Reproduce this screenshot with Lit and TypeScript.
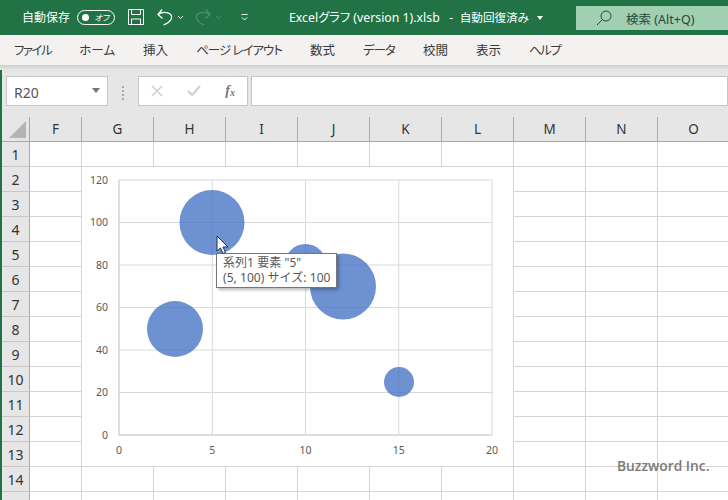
import { LitElement, html, css, svg } from "lit";
import { customElement } from "lit/decorators.js";

const TABS = [
  { t: "ファイル", c: "n2" },
  { t: "ホーム", c: "" },
  { t: "挿入", c: "" },
  { t: "ページ レイアウト", c: "n1" },
  { t: "数式", c: "" },
  { t: "データ", c: "n1" },
  { t: "校閲", c: "" },
  { t: "表示", c: "" },
  { t: "ヘルプ", c: "n2" },
];
const COLS = ["F", "G", "H", "I", "J", "K", "L", "M", "N", "O"];
const ROWS = Array.from({ length: 15 }, (_, i) => i + 1);
const BUBBLES = [
  { cx: 212, cy: 222.5, r: 32.5 },
  { cx: 305.5, cy: 265, r: 21 },
  { cx: 343, cy: 286.5, r: 33 },
  { cx: 175, cy: 329, r: 28 },
  { cx: 399, cy: 382, r: 15 },
];
const PLOT = { l: 119, r: 492, t: 180, b: 435 };
const xAt = (v: number) => PLOT.l + ((PLOT.r - PLOT.l) * v) / 20;
const yAt = (v: number) => PLOT.b - ((PLOT.b - PLOT.t) * v) / 120;

@customElement("app-root")
export class AppRoot extends LitElement {
  static styles = css`
    :host {
      display: block;
      position: relative;
      width: 728px;
      height: 500px;
      overflow: hidden;
      background: #fff;
      font-family: "Noto Sans", "Noto Sans CJK JP", sans-serif;
      font-feature-settings: "palt";
    }
    .title {
      height: 35px;
      background: #217346;
      color: #fff;
      display: flex;
      align-items: center;
      font-size: 12px;
      padding: 0 0 1px 22px;
      box-sizing: border-box;
    }
    .title svg { display: block; flex: none; }
    .autosave { width: 55px; flex: none; }
    .toggle {
      height: 13px;
      border: 1px solid #fff;
      border-radius: 8px;
      display: flex;
      align-items: center;
      justify-content: space-between;
      padding: 0 5px 0 4px;
      box-sizing: content-box;
      margin-right: 13px;
      flex: none;
      width: 27px;
      font-size: 8.5px;
      font-style: italic;
    }
    .knob { width: 7px; height: 7px; border-radius: 50%; background: #fff; }
    .qat { display: flex; align-items: center; width: 161px; flex: none; }
    .undo { margin-left: 13px; }
    .chev { margin-left: 4px; }
    .redo { margin-left: 11px; }
    .custom { margin-left: 19px; }
    .doc { flex: 1; white-space: pre; font-size: 12.3px; display: flex; align-items: center; gap: 8px; }
    .doc svg { margin-top: 2px; }
    .rec { font-size: 11.6px; }
    .search {
      width: 152px;
      height: 24px;
      align-self: flex-end;
      background: #a0cfb2;
      color: #274a38;
      display: flex;
      align-items: center;
      gap: 14px;
      padding-left: 20px;
      box-sizing: border-box;
      flex: none;
      font-size: 12.5px;
      margin-bottom: 4px;
    }
    .tabs {
      height: 30px;
      background: #f3f2f1;
      display: flex;
      align-items: center;
      gap: 28px;
      padding: 0 0 2px 14px;
      box-sizing: border-box;
      font-size: 12.5px;
      color: #3b3a39;
      white-space: pre;
    }
    .n1 { letter-spacing: -1px; }
    .n2 { letter-spacing: -1.5px; }
    .shadow { height: 5px; background: linear-gradient(#cfcfcf, #e6e6e6); }
    .fbar {
      height: 47px;
      background: #e6e6e6;
      border-left: 2px solid #217346;
      display: flex;
      align-items: flex-start;
      padding: 6px 0 0 4px;
      box-sizing: border-box;
    }
    .box {
      height: 30px;
      box-sizing: border-box;
      background: #fff;
      border: 1px solid #c6c6c6;
      display: flex;
      align-items: center;
      flex: none;
    }
    .name {
      width: 102px;
      padding: 2px 7px 0 7px;
      justify-content: space-between;
      font-size: 14px;
      color: #555;
    }
    .tri { width: 0; height: 0; border: 4px solid transparent; border-top: 5px solid #777; border-bottom: 0; margin-top: -4px; }
    .dots { width: 30px; display: flex; flex-direction: column; align-items: center; gap: 2px; padding-top: 10px; flex: none; }
    .dots i { width: 2px; height: 2px; background: #aaa; display: block; }
    .fx {
      width: 110px;
      margin-right: 3px;
      padding: 0 12px 0 12px;
      justify-content: space-between;
    }
    .fx em {
      font-family: "Liberation Serif", serif;
      font-weight: bold;
      font-size: 14px;
      color: #777;
      line-height: 1;
    }
    .fx sub { font-size: 10px; vertical-align: -1px; line-height: 0; }
    .input { flex: 1; }
    .sheet {
      display: grid;
      grid-template-columns: 28px 52px repeat(9, 72px);
      grid-template-rows: 25px repeat(15, 25px);
      border-left: 2px solid #217346;
    }
    .sheet > div { box-sizing: border-box; }
    .corner {
      background: #e6e6e6;
      border-right: 1px solid #a8a8a8;
      border-bottom: 1px solid #a8a8a8;
      display: flex;
      align-items: flex-end;
      justify-content: flex-end;
      padding: 0 3px 3px 0;
    }
    .ch {
      background: #e6e6e6;
      border-right: 1px solid #ababab;
      border-bottom: 1px solid #a8a8a8;
      display: flex;
      align-items: center;
      justify-content: center;
      font-size: 13.5px;
      color: #333;
    }
    .rh {
      background: #e6e6e6;
      border-right: 1px solid #a8a8a8;
      border-bottom: 1px solid #c8c8c8;
      display: flex;
      align-items: center;
      justify-content: center;
      font-size: 14px;
      color: #333;
    }
    .cell { border-right: 1px solid #d4d4d4; border-bottom: 1px solid #d4d4d4; background: #fff; }
    .chart { position: absolute; left: 82px; top: 167px; width: 431px; height: 299px; background: #fff; }
    .chart svg { display: block; }
    .chart text { font-size: 10.5px; fill: #595959; font-family: "Noto Sans", sans-serif; }
    .tip {
      position: absolute;
      left: 216px;
      top: 253px;
      width: 121px;
      height: 35px;
      box-sizing: border-box;
      background: #fff;
      border: 1px solid #767676;
      box-shadow: 2px 2px 3px rgba(0, 0, 0, 0.28);
      padding: 1px 0 0 6px;
      font-size: 12px;
      line-height: 15px;
      color: #575757;
      white-space: pre;
      font-feature-settings: normal;
      letter-spacing: 0.05px;
    }
    .cursor { position: absolute; left: 216px; top: 235px; display: block; }
    .mark {
      position: absolute;
      left: 617px;
      top: 456px;
      font-size: 13.8px;
      font-weight: 600;
      font-family: "Open Sans", sans-serif;
      color: #7a7a7a;
      white-space: pre;
    }
  `;

  private chart() {
    const ox = 82, oy = 167;
    return html`<svg width="431" height="299" viewBox="${ox} ${oy} 431 299">
      ${[0, 20, 40, 60, 80, 100, 120].map((v) => svg`
        <line x1="${PLOT.l}" x2="${PLOT.r}" y1="${yAt(v)}" y2="${yAt(v)}" stroke="${v === 0 ? "#bdbdbd" : "#d9d9d9"}"/>
        <text x="108" y="${yAt(v) + 3.5}" text-anchor="end">${v}</text>`)}
      ${[0, 5, 10, 15, 20].map((v) => svg`
        <line x1="${xAt(v)}" x2="${xAt(v)}" y1="${PLOT.t}" y2="${PLOT.b}" stroke="${v === 0 ? "#bdbdbd" : "#d9d9d9"}"/>
        <text x="${xAt(v)}" y="454" text-anchor="middle">${v}</text>`)}
      ${BUBBLES.map((b) => svg`<circle cx="${b.cx}" cy="${b.cy}" r="${b.r}" fill="#4472c4" fill-opacity="0.78"/>`)}
    </svg>`;
  }

  render() {
    return html`
      <div class="title">
        <span class="autosave">自動保存</span>
        <span class="toggle"><span class="knob"></span><span>オフ</span></span>
        <span class="qat">
          <svg width="16" height="16" viewBox="0 0 16 16" fill="none" stroke="#fff"><path d="M.5.5h15v15H.5zM3.5.5v5h9v-5M3.5 15.5v-5.500h9v5.500"/></svg>
          <svg class="undo" width="16" height="18" viewBox="0 0 16 18" fill="none" stroke="#fff" stroke-width="1.300"><path d="M5 1.500 1 6.500l4.500 4M1 6.500C4 4.500 8 4 11 4.800c3.500 1 4.500 4 3 6.700-1.500 2.500-4 4.500-7.500 5.500"/></svg>
          <svg class="chev" width="7" height="5" viewBox="0 0 7 5" fill="none" stroke="#fff"><path d="m1 1 2.500 2.500L6 1"/></svg>
          <svg class="redo" width="16" height="18" viewBox="0 0 16 18" fill="none" stroke="#4f8f6d" stroke-width="1.300"><path d="M11 1.500l4 5-4.500 4M15 6.500C12 4.500 8 4 5 4.800c-3.500 1-4.500 4-3 6.700 1.500 2.500 4 4.500 7.500 5.500"/></svg>
          <svg class="chev" width="7" height="5" viewBox="0 0 7 5" fill="none" stroke="#4f8f6d"><path d="m1 1 2.500 2.500L6 1"/></svg>
          <svg class="custom" width="7" height="7" viewBox="0 0 7 7" fill="none" stroke="#fff"><path d="M.5.500h6M1 3.500l2.500 2.500L6 3.500"/></svg>
        </span>
        <span class="doc"><span>Excelグラフ (version 1).xlsb   -  <span class="rec">自動回復済み</span></span><svg width="6" height="4" viewBox="0 0 6 4"><path d="M0 0h6L3 4z" fill="#fff"/></svg></span>
        <span class="search">
          <svg width="16" height="16" viewBox="0 0 16 16" fill="none" stroke="#274a38"><circle cx="10" cy="6" r="5"/><path d="M6.500 9.500 1 15"/></svg>
          <span>検索 (Alt+Q)</span>
        </span>
      </div>
      <div class="tabs">${TABS.map((t) => html`<span class=${t.c}>${t.t}</span>`)}</div>
      <div class="shadow"></div>
      <div class="fbar">
        <div class="box name"><span>R20</span><span class="tri"></span></div>
        <div class="dots"><i></i><i></i><i></i><i></i></div>
        <div class="box fx">
          <svg width="12" height="12" viewBox="0 0 12 12" fill="none" stroke="#cfcfcf" stroke-width="1.500"><path d="m1 1 10 10M11 1 1 11"/></svg>
          <svg width="14" height="12" viewBox="0 0 14 12" fill="none" stroke="#cfcfcf" stroke-width="2"><path d="m1 6 4 4 8-9"/></svg>
          <em>f<sub>x</sub></em>
        </div>
        <div class="box input"></div>
      </div>
      <div class="sheet">
        <div class="corner"><svg width="17" height="17" viewBox="0 0 17 17"><path d="M17 0v17H0z" fill="#b4b4b4"/></svg></div>
        ${COLS.map((c) => html`<div class="ch">${c}</div>`)}
        ${ROWS.map((r) => html`<div class="rh">${r}</div>${COLS.map(() => html`<div class="cell"></div>`)}`)}
      </div>
      <div class="chart">${this.chart()}</div>
      <div class="tip">系列1 要素 "5"
(5, 100) サイズ: 100</div>
      <svg class="cursor" width="14" height="19" viewBox="0 0 14 19"><path d="M1 1v15l3.500-3 2.500 5.500 2.500-1-2.500-5.500h5z" fill="#fff" stroke="#1d2a4d" stroke-width="1"/></svg>
      <div class="mark">Buzzword Inc.</div>
    `;
  }
}
